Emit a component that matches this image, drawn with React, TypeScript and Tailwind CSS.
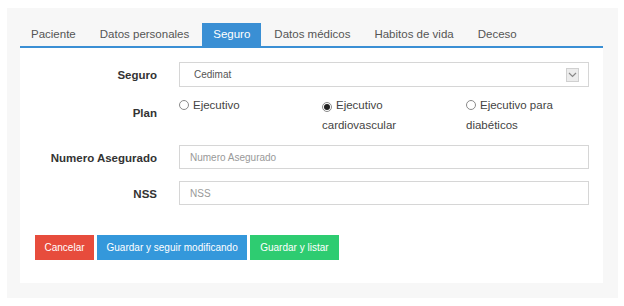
import React from "react";

const font = { fontFamily: '"Liberation Sans", Arial, sans-serif' };

function Radio({ checked }: { checked?: boolean }) {
  return (
    <span className="inline-flex items-center justify-center w-[10px] h-[10px] rounded-full border border-[#8a8a8a] bg-white mr-[4px] align-[-1px]">
      {checked && <span className="w-[6px] h-[6px] rounded-full bg-[#222]" />}
    </span>
  );
}

export default function App() {
  const tabs = ["Paciente", "Datos personales", "Seguro", "Datos médicos", "Habitos de vida", "Deceso"];
  return (
    <div className="w-[624px] h-[306px] bg-white pt-[8px] pl-[7px]" style={font}>
      <div className="w-[611px] h-[290px] bg-[#f7f7f7] pt-[15px] pl-[13px]">
        <div className="w-[583px]">
          <div className="flex border-b-2 border-[#3a8fd4] h-[25px]">
            {tabs.map((t) => (
              <div
                key={t}
                className={
                  "h-[23px] px-[11px] mr-[2px] flex items-center text-[11.5px] " +
                  (t === "Seguro" ? "bg-[#3a8fd4] text-white" : "text-[#555]")
                }
              >
                {t}
              </div>
            ))}
          </div>
          <div className="bg-white h-[235px] pt-[14px] pl-[15px] pr-[14px]">
            {/* Seguro */}
            <div className="flex items-center h-[25px]">
              <div className="w-[122px] shrink-0 text-right font-bold text-[11.5px] text-[#333] pt-[3px]">Seguro</div>
              <div className="ml-[22px] flex-1 h-[25px] border border-[#d6d6d6] flex items-center pl-[14px] pr-[9px] text-[10px] text-[#555]">
                <span className="flex-1">Cedimat</span>
                <span className="w-[13px] h-[14px] bg-[#ececec] border border-[#d0d0d0] flex items-center justify-center">
                  <svg width="9" height="6" viewBox="0 0 9 6">
                    <path d="M1 1 L4.5 4.5 L8 1" fill="none" stroke="#888" strokeWidth="1.2" />
                  </svg>
                </span>
              </div>
            </div>
            {/* Plan */}
            <div className="flex mt-[8px]">
              <div className="w-[122px] shrink-0 text-right font-bold text-[11.5px] text-[#333] pt-[10px]">Plan</div>
              <div className="ml-[22px] flex-1 grid grid-cols-[143px_144px_1fr] text-[11.5px] text-[#444] leading-[20px]">
                <div className="pr-[20px]">
                  <Radio />Ejecutivo
                </div>
                <div className="pr-[20px]">
                  <Radio checked />Ejecutivo cardiovascular
                </div>
                <div className="pr-[20px]">
                  <Radio />Ejecutivo para diabéticos
                </div>
              </div>
            </div>
            {/* Numero Asegurado */}
            <div className="flex items-center h-[24px] mt-[10px]">
              <div className="w-[122px] shrink-0 text-right font-bold text-[11.5px] text-[#333] pt-[4px]">Numero Asegurado</div>
              <div className="ml-[22px] flex-1 h-[24px] border border-[#d6d6d6] flex items-center pl-[10px] text-[10px] text-[#999]">
                Numero Asegurado
              </div>
            </div>
            {/* NSS */}
            <div className="flex items-center h-[24px] mt-[12px]">
              <div className="w-[122px] shrink-0 text-right font-bold text-[11.5px] text-[#333] pt-[4px]">NSS</div>
              <div className="ml-[22px] flex-1 h-[24px] border border-[#d6d6d6] flex items-center pl-[10px] text-[10px] text-[#999]">
                NSS
              </div>
            </div>
            {/* Buttons */}
            <div className="flex mt-[30px] gap-[3px] text-[10px] text-white">
              <div className="h-[25px] px-[9.5px] flex items-center bg-[#e74c3c]">Cancelar</div>
              <div className="h-[25px] px-[9.5px] flex items-center bg-[#3498db]">Guardar y seguir modificando</div>
              <div className="h-[25px] px-[10px] flex items-center bg-[#2ecc71]">Guardar y listar</div>
            </div>
          </div>
        </div>
      </div>
    </div>
  );
}
